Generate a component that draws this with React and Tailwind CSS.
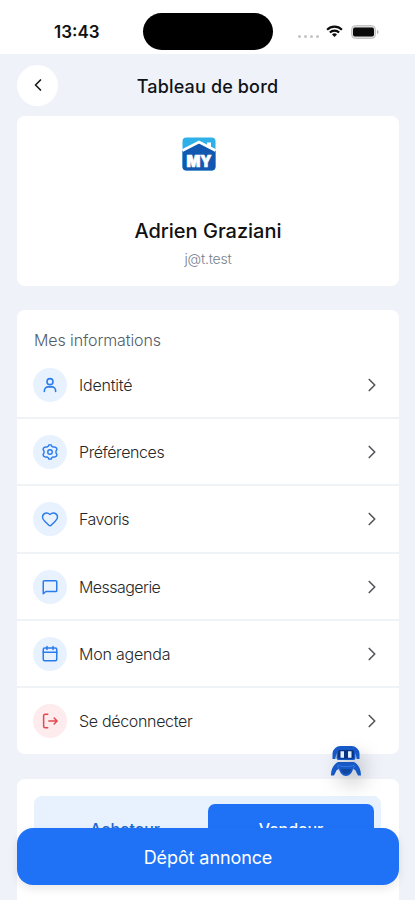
import React from 'react';
import {
  ChevronLeft,
  ChevronRight,
  Heart,
} from 'lucide-react';

const UserIcon = () => (
  <svg width="18" height="18" viewBox="0 0 24 24" fill="none" stroke="currentColor" strokeWidth="2.1" strokeLinecap="round" strokeLinejoin="round">
    <circle cx="12" cy="7.5" r="4" />
    <path d="M4.500 20.500v-1a5 5 0 0 1 5-5h5a5 5 0 0 1 5 5v1" />
  </svg>
);

const GearIcon = () => (
  <svg width="18" height="18" viewBox="0 0 24 24" fill="none" stroke="currentColor" strokeWidth="1.9" strokeLinecap="round" strokeLinejoin="round">
    <path d="M9.800 4.300 10.500 2.500h3l.7 1.800 2 1.150 1.900-.3 2.400 1.200.8 2.500-1.300 1.600v3.100l1.300 1.600-.8 2.500-2.400 1.200-1.900-.3-2 1.150-.7 1.800h-3l-.7-1.800-2-1.150-1.900.3-2.400-1.200-.8-2.500L4 13.550v-3.100L2.700 8.850l.8-2.500 2.400-1.200 1.900.3Z" />
    <circle cx="12" cy="12" r="3" />
  </svg>
);

const MessageIcon = () => (
  <svg width="18" height="18" viewBox="0 0 24 24" fill="none" stroke="currentColor" strokeWidth="2" strokeLinecap="round" strokeLinejoin="round">
    <path d="M3 21V5a1.500 1.500 0 0 1 1.500-1.500h15A1.500 1.500 0 0 1 21 5v11.500a1.500 1.500 0 0 1-1.500 1.500H6.500Z" />
  </svg>
);

const CalendarIcon = () => (
  <svg width="18" height="18" viewBox="0 0 24 24" fill="none" stroke="currentColor" strokeWidth="2" strokeLinecap="round" strokeLinejoin="round">
    <rect x="3" y="4" width="18" height="17" rx="2" />
    <path d="M3 9.500h18M8 2v4M16 2v4" />
  </svg>
);

const LogoutIcon = () => (
  <svg width="18" height="18" viewBox="0 0 24 24" fill="none" stroke="currentColor" strokeWidth="2" strokeLinecap="round" strokeLinejoin="round">
    <path d="M9 3H5.500a2 2 0 0 0-2 2v14a2 2 0 0 0 2 2H9M10.500 12H21M17.500 8l4 4-4 4" />
  </svg>
);

const items = [
  { label: 'Identité', icon: <UserIcon />, tracking: 'tracking-[-0.2px]' },
  { label: 'Préférences', icon: <GearIcon />, tracking: 'tracking-[-0.42px]' },
  { label: 'Favoris', icon: <Heart size={18} strokeWidth={1.9} />, tracking: 'tracking-[-0.5px]' },
  { label: 'Messagerie', icon: <MessageIcon />, tracking: 'tracking-[-0.55px]' },
  { label: 'Mon agenda', icon: <CalendarIcon />, tracking: 'tracking-[-0.2px]' },
  { label: 'Se déconnecter', icon: <LogoutIcon />, tracking: 'tracking-[-0.32px]', danger: true },
];

function StatusBar() {
  return (
    <div className="flex h-[54px] shrink-0 items-start bg-white">
      <span className="ml-[54px] mt-[21px] w-[89px] text-[17px] leading-[22px] font-semibold text-[#111]">
        13:43
      </span>
      <div className="mt-[13px] h-[37px] w-[130px] rounded-full bg-black" />
      <div className="ml-[25px] mt-[35px] flex gap-[3px]">
        {[0, 1, 2, 3].map((i) => (
          <span key={i} className="size-[3px] rounded-full bg-[#c4c4c4]" />
        ))}
      </div>
      <svg className="ml-[7px] mt-[25px]" width="17" height="13" viewBox="0 0 18 14" fill="none" stroke="#0b0b0b" strokeWidth="2.3">
        <path d="M1 5.100a11.400 11.400 0 0 1 16 0" />
        <path d="M4 8.200a7 7 0 0 1 10 0" />
        <path d="M9 13 6.300 10.300a3.800 3.800 0 0 1 5.400 0Z" fill="#0b0b0b" stroke="none" />
      </svg>
      <svg className="ml-[8px] mt-[25px]" width="28" height="14" viewBox="0 0 28 14">
        <rect x=".5" y=".5" width="24" height="13" rx="4" fill="#dcdcdc" stroke="#c4c4c4" />
        <rect x="2" y="2.5" width="21" height="9" rx="2" fill="#0b0b0b" />
        <path d="M26 5v4c1-.3 1.500-1.100 1.500-2S27 5.300 26 5Z" fill="#b5b5b5" />
      </svg>
    </div>
  );
}

function Logo() {
  return (
    <svg className="mr-[18px]" width="34" height="34" viewBox="0 0 34 34">
      <rect x=".5" y=".5" width="33" height="33" rx="4" fill="#2fb0e8" />
      <path d="M.5 14 17 6l16.500 8v15.500a4 4 0 0 1-4 4h-25a4 4 0 0 1-4-4Z" fill="#1258b0" />
      <path d="M25 10V5.500h4v6.500" fill="#fff" />
      <path d="M.5 13.500 17 5l16.500 8.500" fill="none" stroke="#fff" strokeWidth="2.6" />
      <text x="17" y="29.5" textAnchor="middle" textLength="25" lengthAdjust="spacingAndGlyphs" fill="#fff" stroke="#fff" strokeWidth=".7" fontFamily="Inter, sans-serif" fontWeight="900" fontSize="16">MY</text>
    </svg>
  );
}

function Robot() {
  return (
    <svg width="32" height="32" viewBox="0 0 32 32">
      <path d="M2.500 14V8.500A8 8 0 0 1 10.500 1h11a8 8 0 0 1 8 7.500V14h-2.800L25.500 8v5a2 2 0 0 1-2 2h-15a2 2 0 0 1-2-2V8L5.300 14Z" fill="#1558c6" />
      <rect x="8" y="5" width="16" height="8.8" rx="2" fill="#0b3384" />
      <path d="M10.500 6.300H14v6.500h-3.500ZM18 6.300h3.500v6.500H18Z" fill="#dff0ff" />
      <path d="M8 17h16c4.500 2.500 7 7 7 13.500h-3l-2.800-5.500-2.200-1c-1 4-3.500 7-7 7s-6-3-7-7l-2.200 1L4 30.500H1C1 24 3.500 19.500 8 17Z" fill="#1558c6" />
      <path d="M7.500 20c5 2.200 12 2.200 17 0M9 24l-1.500-3M23 24l1.500-3" fill="none" stroke="#3f83e6" strokeWidth=".8" />
      <path d="M11 24h10c-.5 3-2.500 5-5 5s-4.500-2-5-5Z" fill="#0f469f" />
    </svg>
  );
}

function MenuItem({ item, last }) {
  return (
    <div className={`flex h-[67.2px] items-center border-b-2 pt-px pl-[16px] pr-[16px] ${last ? 'border-transparent' : 'border-[#f0f3f6]'}`}>
      <div className={`flex size-[34px] items-center justify-center rounded-full ${item.danger ? 'bg-[#fdebed] text-[#e5484d]' : 'bg-[#e8f2fe] text-[#2a7bed]'}`}>
        {item.icon}
      </div>
      <span className={`ml-[12px] flex-1 text-[16px] font-light text-[#27272a] ${item.tracking}`}>{item.label}</span>
      <ChevronRight size={22} strokeWidth={1.8} className="text-[#55555b]" />
    </div>
  );
}

export default function App() {
  return (
    <div className="relative flex h-[900px] w-[415px] flex-col overflow-hidden bg-[#eff3f9] font-['Inter',sans-serif]">
      <StatusBar />

      <header className="flex h-[62px] shrink-0 items-center px-[17px]">
        <div className="flex size-[41px] items-center justify-center rounded-full bg-white">
          <ChevronLeft size={20} strokeWidth={2} className="text-[#18181b]" />
        </div>
        <h1 className="flex-1 pt-[2px] pr-[41px] text-center text-[18px] font-medium tracking-[0.15px] text-[#111318]">Tableau de bord</h1>
      </header>

      <main className="flex shrink-0 flex-col pl-[17px] pr-[16px]">
        <section className="flex h-[170px] flex-col items-center rounded-[8px] bg-white pt-[21px]">
          <Logo />
          <h2 className="mt-[46px] text-[20px] leading-[28px] font-medium text-[#111]">Adrien Graziani</h2>
          <p className="mt-[4px] text-[14px] leading-[20px] font-light tracking-[-0.2px] text-[#75808c]">j@t.test</p>
        </section>

        <section className="mt-[24px] h-[444px] rounded-[8px] bg-white">
          <h3 className="h-[42px] pl-[17px] pt-[18px] text-[16px] leading-[24px] font-light tracking-[-0.1px] text-[#535c69]">Mes informations</h3>
          <div>
            {items.map((item, idx) => (
              <MenuItem key={item.label} item={item} last={idx === items.length - 1} />
            ))}
          </div>
        </section>

        <section className="mt-[25px] h-[180px] rounded-[8px] bg-white pt-[17px] pl-[17px] pr-[18px]">
          <div className="flex h-[66px] rounded-[8px] bg-[#e8f2fe] p-[8px] pr-[7px] text-[16px] font-medium">
            <div className="flex flex-1 items-center justify-center text-[#1f68d2]">Acheteur</div>
            <div className="flex flex-1 items-center justify-center rounded-[7px] bg-[#1f72f5] text-white">Vendeur</div>
          </div>
        </section>
      </main>

      {/* floating assistant */}
      <div className="absolute left-[330px] top-[745px] drop-shadow-[6px_9px_9px_rgba(0,0,0,0.2)]">
        <Robot />
      </div>

      <button className="absolute left-[17px] top-[828px] h-[57px] w-[382px] rounded-[16px] bg-[#1f72f5] pt-[2px] text-[18px] tracking-[-0.1px] text-white shadow-[0_4px_10px_rgba(0,0,0,0.09)]">
        Dépôt annonce
      </button>
    </div>
  );
}
